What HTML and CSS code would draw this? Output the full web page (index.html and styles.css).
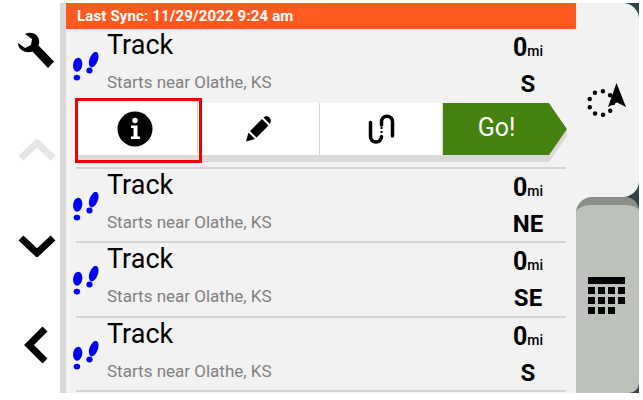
FILE: index.html
```html
<!DOCTYPE html>
<html lang="en">
<head>
  <meta charset="UTF-8" />
  <title>Tracks</title>
  <link rel="stylesheet" href="styles.css">
</head>
<body>
  <svg class="defs" width="0" height="0">
    <symbol id="feet" viewBox="0 0 28 30">
      <ellipse cx="6.200" cy="12.700" rx="4.600" ry="7" transform="rotate(8 6.200 12.700)"/>
      <ellipse cx="5.400" cy="25.600" rx="3.300" ry="2.900"/>
      <ellipse cx="22.200" cy="7.600" rx="4.200" ry="8.200" transform="rotate(20 22.200 7.600)"/>
      <ellipse cx="18" cy="18.600" rx="3.100" ry="3"/>
    </symbol>
  </svg>

  <div class="app">
    <div class="rail">
      <svg class="rail-icon" width="40" height="40" viewBox="0 0 40 40">
        <path d="M1 11 L8 16 L14 13 L15 7 L8 2 C14 -1 21 2 22 8 C22.500 10 22 12 21.500 13.500 L37 29.500 L31 36 L15.500 19.500 C9 22 1 18 1 11 Z" transform="translate(0 2)"/>
      </svg>
      <svg class="rail-icon rail-up" width="40" height="24" viewBox="0 0 40 24">
        <path class="chev chev-off" d="M4 20 L20 5 L36 20"/>
      </svg>
      <svg class="rail-icon rail-down" width="40" height="24" viewBox="0 0 40 24">
        <path class="chev" d="M4 5 L20 20 L36 5"/>
      </svg>
      <svg class="rail-icon rail-left" width="40" height="40" viewBox="0 0 40 40">
        <path class="chev" d="M28 4 L12 20 L28 36"/>
      </svg>
    </div>

    <div class="list">
      <div class="sync">Last Sync: 11/29/2022 9:24 am</div>

      <div class="row row-open">
        <div class="row-main">
          <svg class="feet"><use href="#feet"/></svg>
          <div class="info">
            <div class="name">Track</div>
            <div class="near">Starts near Olathe, KS</div>
          </div>
          <div class="dist">
            <div class="miles">0<small>mi</small></div>
            <div class="dir">S</div>
          </div>
        </div>
        <div class="actions">
          <div class="action action-info">
            <svg width="36" height="36" viewBox="0 0 36 36">
              <circle cx="18" cy="18" r="17.500"/>
              <circle class="cut" cx="18" cy="9.500" r="2.700"/>
              <path class="cut" d="M14 14.500 H20.500 V25.500 H23 V28 H14 V25.500 H16.500 V17 H14 Z"/>
            </svg>
          </div>
          <div class="action action-edit">
            <svg width="28" height="26" viewBox="0 0 28 26">
              <path d="M1 25.500 L3.500 16.500 L10 23 Z M5 15 L17 3 L23.500 9.500 L11.500 21.500 Z M18.500 1.500 C20.500 -0.500 23 0 24.500 1.500 C26 3 26.500 5.500 24.800 8 Z"/>
            </svg>
          </div>
          <div class="action action-link">
            <svg width="28" height="32" viewBox="0 0 28 32">
              <path class="link" d="M3.500 9.500 V23.500 A5.500 5.500 0 0 0 14.500 23.500"/>
              <path class="link" d="M14.500 12 V8.700 A5.500 5.500 0 0 1 25.500 8.700 V23"/>
              <path class="link-dots" d="M14.500 14 V22"/>
            </svg>
          </div>
          <div class="go-wrap">
            <div class="go">Go!</div>
          </div>
        </div>
      </div>

      <div class="row">
        <div class="row-main">
          <svg class="feet"><use href="#feet"/></svg>
          <div class="info">
            <div class="name">Track</div>
            <div class="near">Starts near Olathe, KS</div>
          </div>
          <div class="dist">
            <div class="miles">0<small>mi</small></div>
            <div class="dir">NE</div>
          </div>
        </div>
      </div>

      <div class="row">
        <div class="row-main">
          <svg class="feet"><use href="#feet"/></svg>
          <div class="info">
            <div class="name">Track</div>
            <div class="near">Starts near Olathe, KS</div>
          </div>
          <div class="dist">
            <div class="miles">0<small>mi</small></div>
            <div class="dir">SE</div>
          </div>
        </div>
      </div>

      <div class="row">
        <div class="row-main">
          <svg class="feet"><use href="#feet"/></svg>
          <div class="info">
            <div class="name">Track</div>
            <div class="near">Starts near Olathe, KS</div>
          </div>
          <div class="dist">
            <div class="miles">0<small>mi</small></div>
            <div class="dir">S</div>
          </div>
        </div>
      </div>
    </div>

    <div class="tabs">
      <div class="tab tab-nav">
        <svg width="42" height="34" viewBox="0 0 42 34">
          <circle class="ring" cx="14" cy="20" r="12"/>
          <path d="M29.500 0 L39 24 L30 19.500 L21 24 Z" />
        </svg>
      </div>
      <div class="tab tab-calc">
        <div class="calc">
          <div class="calc-top"></div>
          <div class="calc-key"></div><div class="calc-key"></div><div class="calc-key"></div><div class="calc-key"></div>
          <div class="calc-key"></div><div class="calc-key"></div><div class="calc-key"></div><div class="calc-key"></div>
          <div class="calc-key"></div><div class="calc-key"></div><div class="calc-key"></div>
        </div>
      </div>
    </div>
  </div>
</body>
</html>
```

FILE: styles.css
```css
* {
  box-sizing: border-box;
}

body {
  margin: 0;
  padding-top: 3px;
  background-color: white;
  font-family: Roboto, sans-serif;
  color: black;
}

.defs {
  display: block;
  height: 0;
}

.app {
  display: flex;
  width: 639px;
  height: 390px;
  overflow: hidden;
}

/* left rail */
.rail {
  width: 60px;
  display: flex;
  flex-direction: column;
  align-items: center;
  padding: 27px 0 0 14px;
}

.rail-icon {
  display: block;
  flex: none;
  fill: black;
}

.rail-up {
  margin-top: 68px;
}

.rail-down {
  margin-top: 71px;
}

.rail-left {
  margin-top: 68px;
}

.chev {
  fill: none;
  stroke: black;
  stroke-width: 7;
}

.chev-off {
  stroke: #e6e6e6;
}

/* track list */
.list {
  width: 516px;
  background-color: #f2f2f2;
  border-left: 6px solid #d9d9d9;
}

.sync {
  height: 26px;
  padding-left: 11px;
  background-color: #ff5a1f;
  color: white;
  font-size: 15px;
  font-weight: 700;
  line-height: 26px;
  letter-spacing: 0.15px;
}

.row {
  margin: 0 10px;
  height: 74.300px;
  border-bottom: 2px solid #d4d4d4;
}

.row-open {
  height: 140px;
}

.row-main {
  display: grid;
  grid-template-columns: 31px 1fr 76px;
  height: 72px;
}

.feet {
  width: 29px;
  height: 30px;
  margin: 23px 0 0 -5px;
  fill: #0000f5;
}

.name {
  font-size: 27px;
  line-height: 32px;
}

.near {
  margin-top: 11px;
  font-size: 17px;
  line-height: 20px;
  color: #808080;
}

.dist {
  text-align: center;
  font-weight: 700;
}

.miles {
  margin-top: 6px;
  font-size: 25px;
  line-height: 26px;
}

.miles small {
  font-size: 14px;
  font-weight: 500;
}

.dir {
  margin-top: 7px;
  font-size: 24px;
  line-height: 26px;
}

/* action bar of the open row */
.actions {
  display: flex;
  margin-left: 2px;
  height: 59px;
  margin-top: 2px;
}

.action {
  position: relative;
  flex: none;
  height: 52px;
  display: flex;
  align-items: center;
  justify-content: center;
  background-color: white;
  border-right: 1px solid #d9d9d9;
  box-shadow: 0 7px 0 #d9d9d9;
}

.action svg {
  fill: black;
}

.action .cut {
  fill: white;
}

.action-info {
  width: 120px;
  padding-right: 6px;
  z-index: 1;
}

.action-edit {
  width: 122px;
}

.action-link {
  width: 123px;
  padding-right: 1px;
}

.action-info::after {
  content: "";
  position: absolute;
  box-sizing: border-box;
  left: -3px;
  top: -5px;
  width: 127px;
  height: 65px;
  border: 3px solid #f00000;
}

.link {
  fill: none;
  stroke: black;
  stroke-width: 3.500;
  stroke-linecap: round;
}

.link-dots {
  fill: none;
  stroke: black;
  stroke-width: 2;
  stroke-dasharray: 2 2;
}

.go-wrap {
  flex: none;
  width: 124px;
  height: 59px;
  background-color: #d9d9d9;
  clip-path: polygon(0 0, 106px 0, 124px 26px, 124px 33px, 106px 59px, 0 59px);
}

.go {
  height: 52px;
  padding-right: 17px;
  background-color: #45820f;
  clip-path: polygon(0 0, 106px 0, 124px 26px, 106px 52px, 0 52px);
  color: white;
  font-size: 25px;
  line-height: 50px;
  text-align: center;
}

/* right tabs */
.tabs {
  width: 63px;
  display: flex;
  flex-direction: column;
  background: linear-gradient(to right, #f2f2f2 50%, #2f4447 50%);
}

.tab {
  display: flex;
  justify-content: center;
}

.tab-nav {
  height: 194px;
  padding-top: 80px;
  background-color: #f2f2f2;
  border-radius: 0 16px 16px 0;
}

.tab-nav svg {
  fill: black;
}

.ring {
  fill: none;
  stroke: black;
  stroke-width: 4.500;
  stroke-linecap: round;
  stroke-dasharray: 0 8.300;
}

.tab-calc {
  flex: 1;
  padding: 72px 2px 0 0;
  background-color: #bcc1ba;
  border-top: 8px solid #8a8f8a;
  border-radius: 16px 14px 10px 0;
}

.calc {
  display: grid;
  grid-template-columns: repeat(4, 7px);
  grid-auto-rows: 7px;
  gap: 3px;
  justify-content: center;
  width: 36px;
  height: 36px;
}

.calc-top {
  grid-column: 1 / 5;
}

.calc-top,
.calc-key {
  background-color: black;
}
```
